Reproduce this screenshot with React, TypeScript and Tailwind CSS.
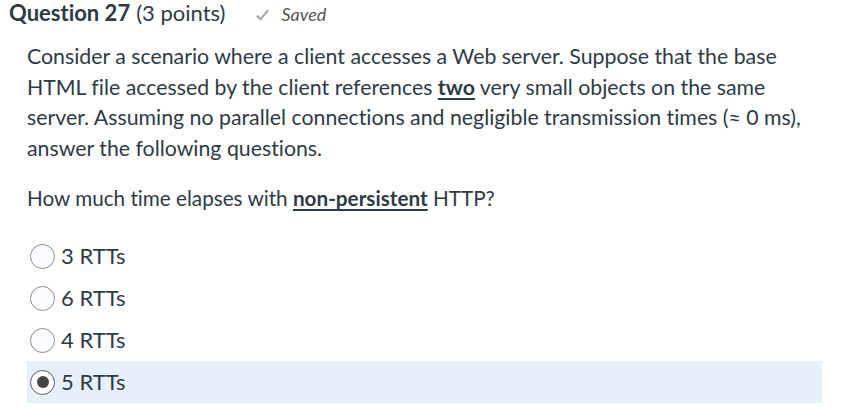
import React from 'react';

const options = [
  { id: 'a', label: '3 RTTs' },
  { id: 'b', label: '6 RTTs' },
  { id: 'c', label: '4 RTTs' },
  { id: 'd', label: '5 RTTs' },
];

const Radio: React.FC<{ checked: boolean }> = ({ checked }) => (
  <span
    className={`mt-[9px] w-[25px] h-[25px] rounded-full border flex items-center justify-center shrink-0 ${
      checked ? 'border-[#5a5a5a] bg-white' : 'border-[#8b8b8b] bg-[#fafcff]'
    }`}
  >
    {checked && <span className="w-[12px] h-[12px] rounded-full bg-[#454545]" />}
  </span>
);

export default function App() {
  const selected = 'd';

  return (
    <div className="w-[844px] h-[410px] bg-white overflow-hidden text-[#2d3b45] font-['Lato','Noto_Sans',sans-serif] [font-variant-ligatures:none]">
      {/* Header */}
      <div className="flex items-baseline pl-[9px] h-[26px] leading-[26px]">
        <h2 className="text-[22px] font-bold">Question 27</h2>
        <span className="text-[22px] ml-[6px]">(3 points)</span>
        <span className="ml-[30px] flex items-baseline text-[#555] text-[18px] italic">
          <svg viewBox="0 0 16 16" className="w-[15px] h-[14px] mr-[11px] self-center translate-y-[1px]" fill="none" stroke="#a8a8a8" strokeWidth="2.4">
            <path d="M1.5 8.5l4.2 4.2L14.5 2.5" />
          </svg>
          Saved
        </span>
      </div>

      {/* Body */}
      <div className="pl-[27px] pr-[20px] mt-[15px] leading-[30.5px]">
        <p className="whitespace-nowrap text-[21.3px]">
          Consider a scenario where a client accesses a Web server. Suppose that the base
          <br />
          HTML file accessed by the client references{' '}
          <strong className="font-bold underline underline-offset-[3px] decoration-[1.5px]">two</strong> very small objects on the same
          <br />
          server. Assuming no parallel connections and negligible transmission times (≈ 0 ms),
          <br />
          answer the following questions.
        </p>
        <p className="mt-[20px] text-[20.7px]">
          How much time elapses with{' '}
          <strong className="font-bold underline underline-offset-[3px] decoration-[1.5px]">non-persistent</strong> HTTP?
        </p>

        <div className="mt-[21px] w-[795px] flex flex-col">
          {options.map((o) => (
            <label
              key={o.id}
              className={`h-[42px] flex items-start pl-[3px] gap-[6px] ${o.id === selected ? 'bg-[#e6f0fb]' : ''}`}
            >
              <Radio checked={o.id === selected} />
              <span className="leading-[42px] text-[22px]">{o.label}</span>
            </label>
          ))}
        </div>
      </div>
    </div>
  );
}
